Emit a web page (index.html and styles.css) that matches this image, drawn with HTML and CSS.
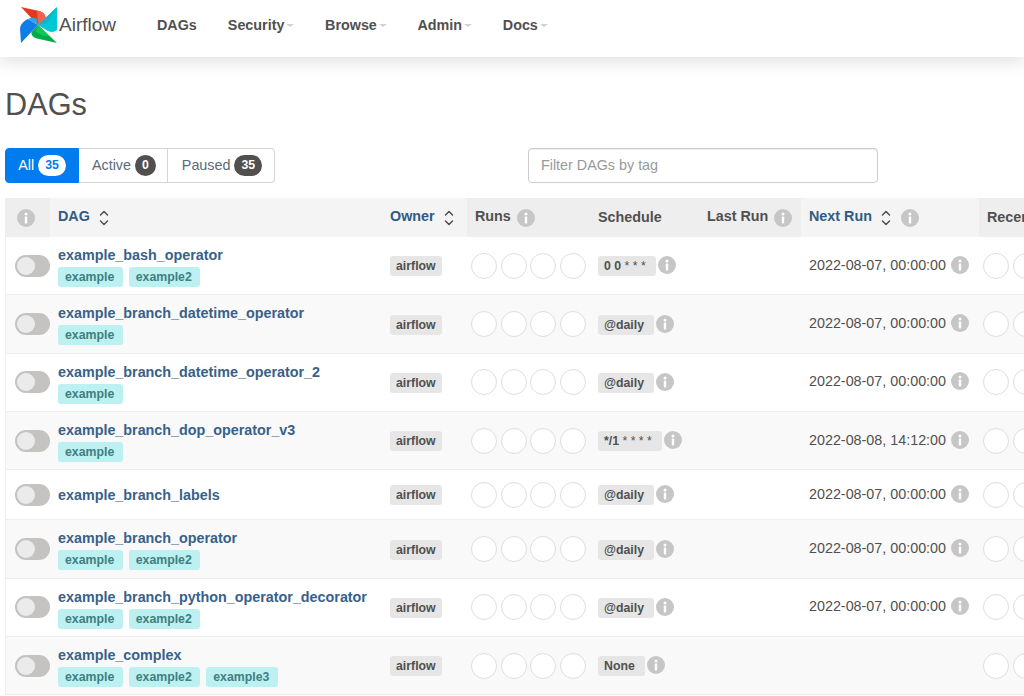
FILE: index.html
```html
<!DOCTYPE html>
<html lang="en">
<head>
<meta charset="utf-8">
<title>Airflow - DAGs</title>
<link rel="stylesheet" href="styles.css">
</head>
<body>
<svg class="defs" width="0" height="0" aria-hidden="true">
  <defs>
    <symbol id="info" viewBox="0 0 18 18">
      <circle cx="9" cy="9" r="9" fill="currentColor"/>
      <circle cx="9" cy="5" r="1.5" fill="#fff"/>
      <rect x="7.8" y="7.6" width="2.4" height="6.8" rx=".6" fill="#fff"/>
    </symbol>
    <symbol id="sort" viewBox="0 0 12 18">
      <path d="M2.500 6 6 2.500 9.500 6M2.500 12 6 15.500 9.500 12" fill="none" stroke="currentColor" stroke-width="1.500" stroke-linecap="round" stroke-linejoin="round"/>
    </symbol>
  </defs>
</svg>

<header class="navbar">
  <a class="brand" href="#">
    <svg class="logo" viewBox="0 0 38 38" width="38" height="38" aria-hidden="true">
      <path d="M18 19 1 1 19 5c4 1 6.500 3.500 6.500 7Z" fill="#e43921"/>
      <path d="M18 19 17 4.600l2 .4c4 1 6.500 3.500 6.500 7Z" fill="#f1634c"/>
      <path d="M18 19 37 1v23c-3 2.500-7 2.500-10 .5Z" fill="#00c7d4"/>
      <path d="M18 19 37 1 27.500 17c-3 1-6.500 1.500-9.500 2Z" fill="#11b4cf"/>
      <path d="M18 19 1 37 0 23c0-4 3.500-8 8-10Z" fill="#0f7de8"/>
      <path d="M18 19 8 13c3-1.500 6-1.500 8.500-.5Z" fill="#2aa4ea"/>
      <path d="M18 19 37 37 17 32.500c-4-1-6-3.500-5.500-6.500Z" fill="#00ad46"/>
      <path d="M18 19 29.500 30c-5 .5-10-1-14-5Z" fill="#0ccb55"/>
    </svg>
    <span class="brand-name">Airflow</span>
  </a>
  <nav class="menu">
    <a href="#">DAGs</a>
    <a href="#">Security<i class="caret"></i></a>
    <a href="#">Browse<i class="caret"></i></a>
    <a href="#">Admin<i class="caret"></i></a>
    <a href="#">Docs<i class="caret"></i></a>
  </nav>
</header>

<main class="content">
  <h1>DAGs</h1>
  <div class="toolbar">
    <div class="tabs">
      <a class="tab tab-all" href="#">All<span class="count count-light">35</span></a>
      <a class="tab tab-active" href="#">Active<span class="count">0</span></a>
      <a class="tab tab-paused" href="#">Paused<span class="count">35</span></a>
    </div>
    <input class="tag-filter" type="text" placeholder="Filter DAGs by tag">
  </div>

  <div class="table-clip">
  <table class="dags">
    <colgroup>
      <col class="c-toggle"><col class="c-dag"><col class="c-owner"><col class="c-runs"><col class="c-sched"><col class="c-last"><col class="c-next"><col class="c-recent">
    </colgroup>
    <thead>
      <tr>
        <th class="th-icon"><svg class="info"><use href="#info"/></svg></th>
        <th class="sortable">DAG<svg class="sort"><use href="#sort"/></svg></th>
        <th class="sortable">Owner<svg class="sort"><use href="#sort"/></svg></th>
        <th>Runs<svg class="info"><use href="#info"/></svg></th>
        <th>Schedule</th>
        <th>Last Run<svg class="info"><use href="#info"/></svg></th>
        <th class="sortable">Next Run<svg class="sort"><use href="#sort"/></svg><svg class="info info-wide"><use href="#info"/></svg></th>
        <th>Recent Tasks</th>
      </tr>
    </thead>
    <tbody>
      <tr>
        <td class="td-toggle"><span class="toggle"></span></td>
        <td><a class="dag-name" href="#">example_bash_operator</a><div class="tags"><span class="tag">example</span><span class="tag">example2</span></div></td>
        <td><span class="label">airflow</span></td>
        <td class="td-dots"><span class="dots"><i></i><i></i><i></i><i></i></span></td>
        <td><span class="label label-sched">0 0 <span class="stars">* * *</span></span><svg class="info info-cell"><use href="#info"/></svg></td>
        <td></td>
        <td class="date">2022-08-07, 00:00:00<svg class="info info-cell"><use href="#info"/></svg></td>
        <td class="td-dots"><span class="dots"><i></i><i></i><i></i><i></i></span></td>
      </tr>
      <tr>
        <td class="td-toggle"><span class="toggle"></span></td>
        <td><a class="dag-name" href="#">example_branch_datetime_operator</a><div class="tags"><span class="tag">example</span></div></td>
        <td><span class="label">airflow</span></td>
        <td class="td-dots"><span class="dots"><i></i><i></i><i></i><i></i></span></td>
        <td><span class="label label-sched">@daily</span><svg class="info info-cell"><use href="#info"/></svg></td>
        <td></td>
        <td class="date">2022-08-07, 00:00:00<svg class="info info-cell"><use href="#info"/></svg></td>
        <td class="td-dots"><span class="dots"><i></i><i></i><i></i><i></i></span></td>
      </tr>
      <tr>
        <td class="td-toggle"><span class="toggle"></span></td>
        <td><a class="dag-name" href="#">example_branch_datetime_operator_2</a><div class="tags"><span class="tag">example</span></div></td>
        <td><span class="label">airflow</span></td>
        <td class="td-dots"><span class="dots"><i></i><i></i><i></i><i></i></span></td>
        <td><span class="label label-sched">@daily</span><svg class="info info-cell"><use href="#info"/></svg></td>
        <td></td>
        <td class="date">2022-08-07, 00:00:00<svg class="info info-cell"><use href="#info"/></svg></td>
        <td class="td-dots"><span class="dots"><i></i><i></i><i></i><i></i></span></td>
      </tr>
      <tr>
        <td class="td-toggle"><span class="toggle"></span></td>
        <td><a class="dag-name" href="#">example_branch_dop_operator_v3</a><div class="tags"><span class="tag">example</span></div></td>
        <td><span class="label">airflow</span></td>
        <td class="td-dots"><span class="dots"><i></i><i></i><i></i><i></i></span></td>
        <td><span class="label label-sched">*/1 <span class="stars">* * * *</span></span><svg class="info info-cell"><use href="#info"/></svg></td>
        <td></td>
        <td class="date">2022-08-08, 14:12:00<svg class="info info-cell"><use href="#info"/></svg></td>
        <td class="td-dots"><span class="dots"><i></i><i></i><i></i><i></i></span></td>
      </tr>
      <tr>
        <td class="td-toggle"><span class="toggle"></span></td>
        <td><a class="dag-name" href="#">example_branch_labels</a></td>
        <td><span class="label">airflow</span></td>
        <td class="td-dots"><span class="dots"><i></i><i></i><i></i><i></i></span></td>
        <td><span class="label label-sched">@daily</span><svg class="info info-cell"><use href="#info"/></svg></td>
        <td></td>
        <td class="date">2022-08-07, 00:00:00<svg class="info info-cell"><use href="#info"/></svg></td>
        <td class="td-dots"><span class="dots"><i></i><i></i><i></i><i></i></span></td>
      </tr>
      <tr>
        <td class="td-toggle"><span class="toggle"></span></td>
        <td><a class="dag-name" href="#">example_branch_operator</a><div class="tags"><span class="tag">example</span><span class="tag">example2</span></div></td>
        <td><span class="label">airflow</span></td>
        <td class="td-dots"><span class="dots"><i></i><i></i><i></i><i></i></span></td>
        <td><span class="label label-sched">@daily</span><svg class="info info-cell"><use href="#info"/></svg></td>
        <td></td>
        <td class="date">2022-08-07, 00:00:00<svg class="info info-cell"><use href="#info"/></svg></td>
        <td class="td-dots"><span class="dots"><i></i><i></i><i></i><i></i></span></td>
      </tr>
      <tr>
        <td class="td-toggle"><span class="toggle"></span></td>
        <td><a class="dag-name" href="#">example_branch_python_operator_decorator</a><div class="tags"><span class="tag">example</span><span class="tag">example2</span></div></td>
        <td><span class="label">airflow</span></td>
        <td class="td-dots"><span class="dots"><i></i><i></i><i></i><i></i></span></td>
        <td><span class="label label-sched">@daily</span><svg class="info info-cell"><use href="#info"/></svg></td>
        <td></td>
        <td class="date">2022-08-07, 00:00:00<svg class="info info-cell"><use href="#info"/></svg></td>
        <td class="td-dots"><span class="dots"><i></i><i></i><i></i><i></i></span></td>
      </tr>
      <tr>
        <td class="td-toggle"><span class="toggle"></span></td>
        <td><a class="dag-name" href="#">example_complex</a><div class="tags"><span class="tag">example</span><span class="tag">example2</span><span class="tag">example3</span></div></td>
        <td><span class="label">airflow</span></td>
        <td class="td-dots"><span class="dots"><i></i><i></i><i></i><i></i></span></td>
        <td><span class="label label-sched">None</span><svg class="info info-cell"><use href="#info"/></svg></td>
        <td></td>
        <td class="date"></td>
        <td class="td-dots"><span class="dots"><i></i><i></i><i></i><i></i></span></td>
      </tr>
    </tbody>
  </table>
  </div>
</main>
</body>
</html>
```

FILE: styles.css
```css
* { box-sizing: border-box; }

html, body {
  margin: 0;
  height: 100%;
  overflow: hidden;
  background: #fff;
  color: #51504f;
  font: 14.33px/20px "Liberation Sans", Arial, sans-serif;
}

a { color: inherit; text-decoration: none; }

.defs { position: absolute; }

.navbar {
  display: flex;
  align-items: center;
  height: 57px;
  padding: 0 0 8px 20px;
  background: #fff;
  box-shadow: 0 2px 20px rgba(0, 0, 0, .16);
}

.brand { display: flex; align-items: center; }
.logo { display: block; }
.brand-name { margin-left: 1px; font-size: 19px; color: #51504f; }

.menu { display: flex; margin-left: 25.5px; }
.menu a {
  display: flex;
  align-items: center;
  padding: 0 15.5px;
  font-weight: 700;
  color: #51504f;
}
.caret {
  width: 0;
  height: 0;
  margin: 2px 0 0 1.7px;
  border: 4px solid transparent;
  border-top: 3px solid #d5ced6;
  border-bottom: 0;
}

.content { padding: 0 0 0 5px; }

h1 {
  margin: 31px 0 27px;
  font-size: 30.7px;
  line-height: 33px;
  font-weight: 400;
  color: #51504f;
}

.toolbar { display: flex; align-items: stretch; height: 35px; }

.tabs { display: flex; width: 270px; }
.tab {
  display: flex;
  align-items: center;
  justify-content: center;
  gap: 4px;
  padding-bottom: 1px;
  border: 1px solid #d4d4d4;
  border-left: 0;
  color: #5b6a78;
}
.tab-all {
  width: 74px;
  background: #017cee;
  border: 1px solid #017cee;
  border-radius: 4px 0 0 4px;
  color: #fff;
}
.tab-active { width: 89px; padding-left: 2px; }
.tab-paused { width: 107px; padding-left: 2px; border-radius: 0 4px 4px 0; }

.count {
  min-width: 21px;
  padding: 0 7px;
  border-radius: 10.5px;
  background: #51504f;
  color: #fff;
  font-size: 12.3px;
  font-weight: 700;
  line-height: 21px;
  text-align: center;
}
.count-light { background: #fff; color: #017cee; }

.tag-filter {
  width: 350px;
  margin-left: 253px;
  padding: 0 12px 2px;
  border: 1px solid #ccc;
  border-radius: 4px;
  box-shadow: inset 0 1px 1px rgba(0, 0, 0, .075);
  font: inherit;
  color: #51504f;
}
.tag-filter::placeholder { color: #999; opacity: 1; }

.table-clip { margin-top: 15px; overflow: hidden; }

.dags {
  width: 1140px;
  table-layout: fixed;
  border-collapse: separate;
  border-spacing: 0;
  border-left: 1px solid #eee;
}
.c-toggle { width: 44px; }
.c-dag { width: 332px; }
.c-owner { width: 85px; }
.c-runs { width: 123px; }
.c-sched { width: 109px; }
.c-last { width: 102px; }
.c-next { width: 178px; }

.dags th {
  height: 39px;
  padding: 0 8px 2px;
  background: #eee;
  font-weight: 700;
  text-align: left;
  vertical-align: middle;
  white-space: nowrap;
  color: #51504f;
}
.dags th.sortable { background: #f4f4f4; color: #2f5b84; }
.dags th.th-icon { padding-left: 11px; }

.dags td {
  height: 58.33px;
  padding: 8px;
  border-bottom: 1px solid #eee;
  vertical-align: middle;
  white-space: nowrap;
}
.dags td.date { padding: 7px 8px 8px; }
.dags tbody tr:nth-child(even) td { background: #f9f9f9; }
.dags tbody tr:nth-child(5) td { height: 50px; }

.dags td.td-toggle { padding: 0 0 0 9px; }
.dags td.td-dots { padding: 0 4px; }

.info { width: 18px; height: 18px; color: #c6c6c6; vertical-align: middle; }
th .info { margin-left: 6px; }
.dags th.th-icon .info { margin-left: 0; }
.info-cell { margin: 0 0 2px 2px; }
th .info-wide { margin-left: 9px; }
.date .info-cell { margin-left: 5px; }

.sort { width: 12px; height: 18px; margin-left: 8px; color: #51504f; vertical-align: middle; }

.toggle {
  display: block;
  width: 35px;
  height: 22px;
  padding: 2px;
  border-radius: 11px;
  background: #c4c3c1;
}
.toggle::before {
  content: "";
  display: block;
  width: 18px;
  height: 18px;
  border-radius: 50%;
  background: #ebebeb;
}

.dag-name { display: block; font-weight: 700; color: #37618a; }

.tags { display: flex; gap: 6px; margin-top: 2px; height: 19.33px; }
.tag {
  height: 20px;
  padding: 0 8.5px 0 7px;
  border-radius: 3px;
  background: #bdf0f0;
  color: #3e7f80;
  font-size: 12.3px;
  font-weight: 700;
  line-height: 20px;
}

.label {
  display: inline-block;
  height: 20px;
  padding: 0 6px;
  border-radius: 3px;
  background: #e6e6e6;
  color: #51504f;
  font-size: 12.3px;
  font-weight: 700;
  line-height: 20px;
  vertical-align: middle;
}
.label-sched { padding: 0 10px 0 6px; }
.stars { font-weight: 400; }

.dots { display: flex; gap: 3.5px; }
.dots i {
  flex: none;
  width: 26px;
  height: 26px;
  border: 1.5px solid #dedede;
  border-radius: 50%;
  background: #fff;
}
```
